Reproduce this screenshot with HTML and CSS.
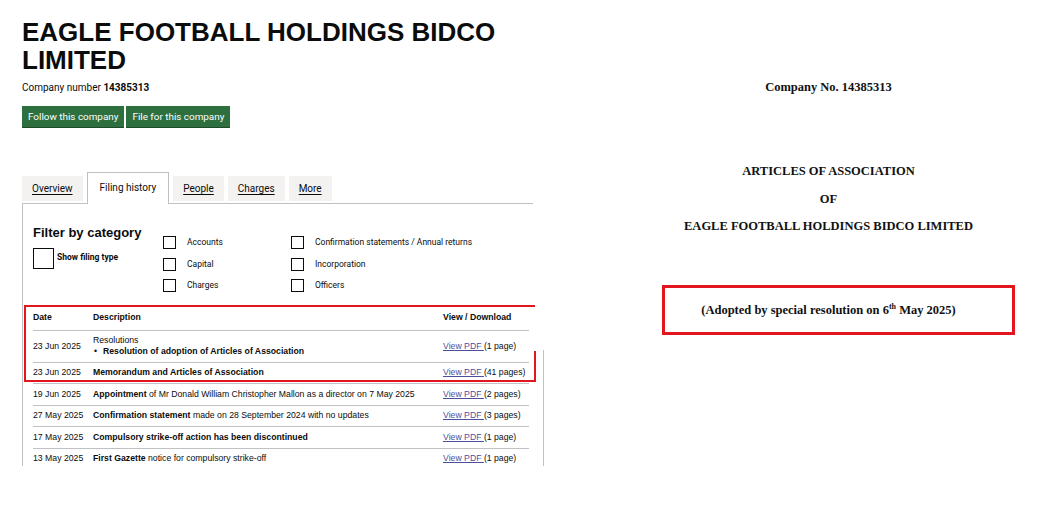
FILE: index.html
```html
<!DOCTYPE html>
<html lang="en">
<head>
<meta charset="utf-8">
<title>Eagle Football Holdings Bidco Limited</title>
<link rel="stylesheet" href="styles.css">
</head>
<body>
<div class="page">
  <section class="ch">
    <h1 class="ch-title">EAGLE FOOTBALL HOLDINGS BIDCO<br>LIMITED</h1>
    <p class="ch-number">Company number <strong>14385313</strong></p>
    <div class="ch-buttons">
      <a class="btn" href="#">Follow this company</a>
      <a class="btn" href="#">File for this company</a>
    </div>
    <nav class="tabs">
      <a class="tab" href="#">Overview</a>
      <span class="tab tab-active">Filing history</span>
      <a class="tab" href="#">People</a>
      <a class="tab" href="#">Charges</a>
      <a class="tab" href="#">More</a>
    </nav>
    <div class="panel">
      <div class="filter">
        <div class="filter-head">
          <h2 class="filter-title">Filter by category</h2>
          <label class="show-type"><span class="box box-lg"></span><span>Show filing type</span></label>
        </div>
        <div class="filter-grid">
          <label class="opt"><span class="box"></span>Accounts</label>
          <label class="opt"><span class="box"></span>Confirmation statements / Annual returns</label>
          <label class="opt"><span class="box"></span>Capital</label>
          <label class="opt"><span class="box"></span>Incorporation</label>
          <label class="opt"><span class="box"></span>Charges</label>
          <label class="opt"><span class="box"></span>Officers</label>
        </div>
      </div>
      <div class="history">
        <table class="fh">
          <colgroup><col class="c-date"><col class="c-desc"><col class="c-view"></colgroup>
          <thead>
            <tr><th>Date</th><th>Description</th><th>View / Download</th></tr>
          </thead>
          <tbody>
            <tr class="tall">
              <td>23 Jun 2025</td>
              <td>Resolutions<ul class="sub"><li><b>Resolution of adoption of Articles of Association</b></li></ul></td>
              <td><a href="#">View PDF </a>(1 page)</td>
            </tr>
            <tr>
              <td>23 Jun 2025</td>
              <td><b>Memorandum and Articles of Association</b></td>
              <td><a href="#">View PDF </a>(41 pages)</td>
            </tr>
            <tr>
              <td>19 Jun 2025</td>
              <td><b>Appointment</b> of Mr Donald William Christopher Mallon as a director on 7 May 2025</td>
              <td><a href="#">View PDF </a>(2 pages)</td>
            </tr>
            <tr>
              <td>27 May 2025</td>
              <td><b>Confirmation statement</b> made on 28 September 2024 with no updates</td>
              <td><a href="#">View PDF </a>(3 pages)</td>
            </tr>
            <tr>
              <td>17 May 2025</td>
              <td><b>Compulsory strike-off action has been discontinued</b></td>
              <td><a href="#">View PDF </a>(1 page)</td>
            </tr>
            <tr>
              <td>13 May 2025</td>
              <td><b>First Gazette</b> notice for compulsory strike-off</td>
              <td><a href="#">View PDF </a>(1 page)</td>
            </tr>
          </tbody>
        </table>
        <div class="mark"></div>
      </div>
    </div>
  </section>
  <section class="doc">
    <p class="doc-line doc-no">Company No. 14385313</p>
    <p class="doc-line doc-h">ARTICLES OF ASSOCIATION</p>
    <p class="doc-line doc-of">OF</p>
    <p class="doc-line doc-name">EAGLE FOOTBALL HOLDINGS BIDCO LIMITED</p>
    <div class="doc-box">
      <p class="doc-line">(Adopted by special resolution on 6<sup>th</sup> May 2025)</p>
    </div>
  </section>
</div>
</body>
</html>
```

FILE: styles.css
```css
* { box-sizing: border-box; }
html, body { margin: 0; padding: 0; background: #fff; }
body { color: #0b0c0c; font-family: "Liberation Sans", Arial, sans-serif; }

.page { display: flex; width: 1045px; height: 532px; overflow: hidden; }

/* ---------- Companies House screenshot ---------- */
.ch { width: 628px; padding-left: 22px; flex: none; }
.ch-title {
  margin: 18px 0 0;
  font: bold 26px/28px "Liberation Sans", Arial, sans-serif;
  color: #0b0c0c;
}
.ch-number {
  margin: 7px 0 0;
  font: 10px/14px Roboto, "Liberation Sans", sans-serif;
}
.ch-number strong { font-weight: bold; }

.ch-buttons { display: flex; gap: 2px; margin-top: 11px; }
.btn {
  display: block;
  height: 21px;
  padding: 0 6px;
  background: #2e6f3f;
  box-shadow: 0 1px 0 #1d4a29;
  color: #fff;
  text-decoration: none;
  font: 9.9px/21px Roboto, "Liberation Sans", sans-serif;
}

.tabs {
  display: flex;
  align-items: flex-end;
  gap: 4px;
  width: 511px;
  height: 32px;
  margin-top: 45px;
  border-bottom: 1px solid #bfc1c3;
}
.tab {
  display: block;
  height: 25px;
  margin-bottom: 2px;
  padding: 0 10px;
  background: #f3f2f1;
  color: #0b0c0c;
  font: 10px/25px Roboto, "Liberation Sans", sans-serif;
  text-decoration: underline;
  text-underline-offset: 2px;
}
.tab-active {
  height: 32px;
  margin-bottom: -1px;
  padding: 0 12px;
  background: #fff;
  border: 1px solid #bfc1c3;
  border-bottom: none;
  line-height: 30px;
  text-decoration: none;
}

.panel {
  position: relative;
  width: 522px;
  height: 262px;
  padding: 20px 0 0 10px;
  border-left: 1px solid #bfc1c3;
  overflow-x: visible;
  overflow-y: clip;
}
.panel::after {
  content: "";
  position: absolute;
  left: 520px;
  top: 146px;
  bottom: 0;
  width: 1px;
  background: #bfc1c3;
}

.filter { display: flex; }
.filter-head { width: 130px; flex: none; }
.filter-title {
  margin: 0;
  font: bold 13px/17px "Liberation Sans", Arial, sans-serif;
}
.show-type {
  display: flex;
  align-items: flex-start;
  gap: 3px;
  margin-top: 7px;
  font: bold 8.5px/18px Roboto, "Liberation Sans", sans-serif;
}
.box {
  display: block;
  flex: none;
  width: 13px;
  height: 13px;
  border: 1px solid #0b0c0c;
  background: #fff;
}
.box-lg { width: 21px; height: 21px; }

.filter-grid {
  display: grid;
  grid-template-columns: 128px auto;
  row-gap: 8.5px;
  margin-top: 12px;
}
.opt {
  display: flex;
  align-items: center;
  gap: 11px;
  height: 13px;
  font: 8.5px/13px Roboto, "Liberation Sans", sans-serif;
  color: #0b0c0c;
}

.history { position: relative; margin-top: 14px; }
.fh {
  width: 496px;
  table-layout: fixed;
  border-collapse: collapse;
  font: 8.7px/11px "Liberation Sans", Arial, sans-serif;
  color: #0b0c0c;
}
.c-date { width: 60px; }
.c-desc { width: 350px; }
.c-view { width: 86px; }
.fh th {
  height: 24px;
  padding: 0;
  text-align: left;
  font-weight: bold;
  border-bottom: 1px solid #bfc1c3;
}
.fh td {
  height: 21.5px;
  padding: 0;
  vertical-align: middle;
  white-space: nowrap;
  border-bottom: 1px solid #bfc1c3;
}
.fh tr.tall td { height: 32px; }
.fh a { color: #4d4f9c; text-decoration: underline; }
.sub { margin: 0; padding: 0 0 0 10px; list-style: none; }
.sub li { position: relative; }
.sub li::before {
  content: "\2022";
  position: absolute;
  left: -9px;
  font-weight: normal;
}

.mark {
  position: absolute;
  left: -9px;
  top: -1px;
  width: 511px;
  height: 77px;
  border: 2px solid #e3161f;
  border-right: none;
}
.mark::after {
  content: "";
  position: absolute;
  right: -1px;
  bottom: -2px;
  width: 2px;
  height: 31px;
  background: #e3161f;
}

/* ---------- Articles of Association document ---------- */
.doc {
  width: 401px;
  flex: none;
  padding-top: 79px;
  display: flex;
  flex-direction: column;
  align-items: center;
  font-family: "Liberation Serif", "Times New Roman", serif;
  font-weight: bold;
  font-size: 12.5px;
  color: #111;
}
.doc-line { margin: 0; line-height: 16px; }
.doc-h { margin-top: 68px; }
.doc-of { margin-top: 12px; }
.doc-name { margin-top: 11px; }
.doc-box {
  align-self: flex-start;
  margin: 51px 0 0 34px;
  width: 353px;
  height: 50px;
  border: 3px solid #e3161f;
  display: flex;
  align-items: center;
  justify-content: center;
  padding-right: 20px;
}
.doc-box sup { font-size: 8px; line-height: 0; vertical-align: 5px; }
```
